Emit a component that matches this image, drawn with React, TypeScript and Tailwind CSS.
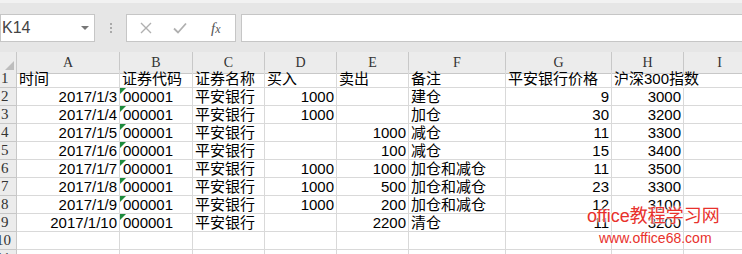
import React from 'react';

type Cell = { v: string; r?: boolean; g?: boolean };

const colLetters = ['A', 'B', 'C', 'D', 'E', 'F', 'G', 'H', 'I'];
const widths = [103, 73, 72, 72, 72, 97, 106, 72, 72];

const L = (v: string): Cell => ({ v });
const R = (v: string): Cell => ({ v, r: true });
const G = (v: string): Cell => ({ v, g: true });
const E: Cell = { v: '' };

const rows: Cell[][] = [
  [L('时间'), L('证券代码'), L('证券名称'), L('买入'), L('卖出'), L('备注'), L('平安银行价格'), L('沪深300指数'), E],
  [R('2017/1/3'), G('000001'), L('平安银行'), R('1000'), E, L('建仓'), R('9'), R('3000'), E],
  [R('2017/1/4'), G('000001'), L('平安银行'), R('1000'), E, L('加仓'), R('30'), R('3200'), E],
  [R('2017/1/5'), G('000001'), L('平安银行'), E, R('1000'), L('减仓'), R('11'), R('3300'), E],
  [R('2017/1/6'), G('000001'), L('平安银行'), E, R('100'), L('减仓'), R('15'), R('3400'), E],
  [R('2017/1/7'), G('000001'), L('平安银行'), R('1000'), R('1000'), L('加仓和减仓'), R('11'), R('3500'), E],
  [R('2017/1/8'), G('000001'), L('平安银行'), R('1000'), R('500'), L('加仓和减仓'), R('23'), R('3300'), E],
  [R('2017/1/9'), G('000001'), L('平安银行'), R('1000'), R('200'), L('加仓和减仓'), R('12'), R('3100'), E],
  [R('2017/1/10'), G('000001'), L('平安银行'), E, R('2200'), L('清仓'), R('11'), R('3200'), E],
  [E, E, E, E, E, E, E, E, E],
  [E, E, E, E, E, E, E, E, E],
];

const gridCols = { gridTemplateColumns: `17px ${widths.map((w) => `${w}px`).join(' ')}` };

export default function App() {
  return (
    <div className="relative w-[742px] h-[254px] overflow-hidden bg-white font-['Liberation_Sans','Noto_Sans_CJK_SC',sans-serif]">
      {/* formula bar */}
      <div className="h-[52px] bg-[#e6e6e6] border-t-[3px] border-[#f2f2f2] flex items-start pt-[11px]">
        <div className="w-[95px] h-[28px] bg-white border border-[#c6c6c6] flex items-center justify-between pl-[1px] pr-[5px]">
          <span className="text-[16px] text-[#444]">K14</span>
          <span className="w-0 h-0 border-l-[4px] border-r-[4px] border-t-[4px] border-l-transparent border-r-transparent border-t-[#777]" />
        </div>
        <div className="w-[31px] h-[28px] flex flex-col items-center justify-center gap-[2px]">
          <span className="w-[2px] h-[2px] bg-[#a9a9a9]" />
          <span className="w-[2px] h-[2px] bg-[#a9a9a9]" />
          <span className="w-[2px] h-[2px] bg-[#a9a9a9]" />
        </div>
        <div className="w-[110px] h-[28px] bg-white border border-[#c6c6c6] flex items-center pl-[12px] gap-[19px]">
          <svg width="14" height="14" viewBox="0 0 14 14">
            <path d="M2 2 L12 12 M12 2 L2 12" stroke="#b0b0b0" strokeWidth="1.4" fill="none" />
          </svg>
          <svg width="16" height="14" viewBox="0 0 16 14">
            <path d="M2 7.5 L6 11.5 L14 2.5" stroke="#b0b0b0" strokeWidth="1.8" fill="none" />
          </svg>
          <span className="text-[15px] italic text-[#555] font-['Liberation_Serif',serif] ml-[4px]">
            f<span className="text-[12px]">x</span>
          </span>
        </div>
        <div className="ml-[5px] flex-1 h-[28px] bg-white border-y border-l border-[#c6c6c6]" />
      </div>

      {/* column headers */}
      <div className="grid h-[18px]" style={gridCols}>
        <div className="bg-[#ececec] border-r border-b border-[#c8c8c8] flex items-end justify-end pr-[2px] pb-[2px]">
          <svg width="10" height="10" viewBox="0 0 10 10">
            <path d="M10 0 L10 10 L0 10 Z" fill="#bdbdbd" />
          </svg>
        </div>
        {colLetters.map((c) => (
          <div
            key={c}
            className="bg-[#ececec] border-r border-b border-[#c8c8c8] flex items-center justify-center text-[14px] text-[#333] font-['Liberation_Serif',serif]"
          >
            {c}
          </div>
        ))}
      </div>

      {/* rows */}
      {rows.map((row, i) => (
        <div key={i} className="grid h-[18px]" style={gridCols}>
          <div className="bg-[#ececec] border-r border-b border-[#c8c8c8] flex items-center text-[15px] text-[#333] font-['Liberation_Serif',serif] leading-none whitespace-nowrap overflow-hidden">
            <span className={i + 1 >= 10 ? '-ml-[4px]' : 'ml-[1px]'}>{i + 1}</span>
          </div>
          {row.map((cell, j) => (
            <div
              key={j}
              className={`relative border-b border-[#d9d9d9] flex items-center whitespace-nowrap text-[15px] text-black leading-none ${
                cell.r ? 'justify-end pr-[2px]' : 'justify-start pl-[2px]'
              } ${i === 0 && j === 7 ? 'border-r border-r-transparent' : 'border-r border-r-[#d9d9d9]'}`}
            >
              {cell.g && (
                <span className="absolute left-0 top-0 w-0 h-0 border-t-[6px] border-r-[6px] border-t-[#1e8b3c] border-r-transparent" />
              )}
              <span className={cell.g ? 'ml-[1px]' : ''}>{cell.v}</span>
            </div>
          ))}
        </div>
      ))}

      {/* watermark */}
      <div className="absolute left-[587px] top-[207px] text-[18px] leading-none text-[#e8312c] whitespace-nowrap [text-shadow:0_0_2px_#fff,0_0_2px_#fff,0_0_3px_#fff]">
        office教程学习网
      </div>
      <div className="absolute left-[599px] top-[231px] text-[14px] leading-none text-[#e8312c] whitespace-nowrap [text-shadow:0_0_2px_#fff,0_0_2px_#fff]">
        www.office68.com
      </div>
    </div>
  );
}
